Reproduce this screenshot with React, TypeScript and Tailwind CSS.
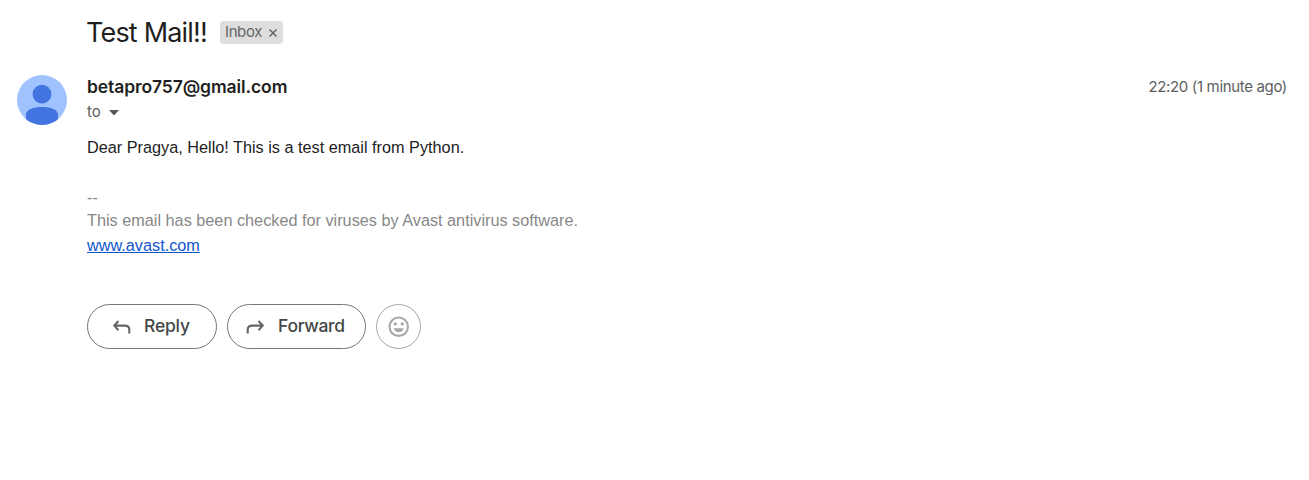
import React from "react";

function Avatar() {
  return (
    <svg width="50" height="50" viewBox="0 0 50 50" className="shrink-0">
      <clipPath id="avatar-clip">
        <circle cx="25" cy="25" r="25" />
      </clipPath>
      <g clipPath="url(#avatar-clip)">
        <rect width="50" height="50" fill="#a0c3ff" />
        <circle cx="25" cy="19.2" r="9.4" fill="#4374e0" />
        <path d="M9 52V40C9 34.5 16 32 25 32S41 34.5 41 40V52Z" fill="#4374e0" />
      </g>
    </svg>
  );
}

function ReplyIcon() {
  return (
    <svg width="20" height="16" viewBox="0 0 20 16" fill="none" stroke="#646769" strokeWidth="2.1">
      <path d="M6.4 2 2.3 6.6 6.4 11.2M2.5 6.6H12.8Q17.3 6.6 17.3 10.8V14.4" />
    </svg>
  );
}

function SmileIcon() {
  return (
    <svg width="22" height="22" viewBox="0 0 22 22" fill="#a8a8a8">
      <circle cx="10.7" cy="10.7" r="9.2" fill="none" stroke="#a8a8a8" strokeWidth="2.1" />
      <circle cx="7.2" cy="7.9" r="1.6" />
      <circle cx="14.2" cy="7.9" r="1.6" />
      <path d="M5.6 12.2H15.8C15 15 13.1 16.3 10.7 16.3S6.4 15 5.6 12.2Z" />
    </svg>
  );
}

export default function App() {
  return (
    <main className="h-[480px] w-full overflow-hidden bg-white pl-[17px] pr-[22px] pt-[14px] font-['Inter',sans-serif] text-[#1f1f1f]">
      <header className="flex h-9 items-center pl-[69px]">
        <h1 className="w-[134px] whitespace-nowrap pt-[2px] text-[27px] leading-9 tracking-[-0.82px]">Test Mail!!</h1>
        <span className="mt-px flex h-[23px] w-[63px] items-center gap-[7px] rounded-[4px] bg-[#ddd] pl-[5px] text-[15px] tracking-[-0.4px] text-[#666]">
          Inbox
          <svg width="8" height="8" viewBox="0 0 8 8" stroke="#666" strokeWidth="1.5" className="mt-px shrink-0">
            <path d="m.5.5 7 7m0-7-7 7" />
          </svg>
        </span>
      </header>
      <section className="mt-[25px] flex gap-5">
        <Avatar />
        <div className="flex-1">
          <div className="flex h-6 items-center justify-between">
            <strong className="text-[17.5px] font-semibold tracking-[-0.1px]">betapro757@gmail.com</strong>
            <time className="text-[15px] tracking-[-0.34px] text-[#5e5e5e]">22:20 (1 minute ago)</time>
          </div>
          <div className="flex h-[26px] items-center gap-[8px] text-[15px] text-[#5e5e5e]">
            to
            <svg width="10" height="6" viewBox="0 0 10 6" fill="#555" className="mt-px">
              <path d="M0 0H10L5 5.5Z" />
            </svg>
          </div>
          <div className="mt-[10px] font-['Liberation_Sans',Arial,sans-serif] text-[16.25px] leading-[25px]">
            <p className="text-[#222]">Dear Pragya, Hello! This is a test email from Python.</p>
            <div className="mt-[25px] text-[#888]">
              <p>--</p>
              <p className="-mt-[2px]">This email has been checked for viruses by Avast antivirus software.</p>
              <a href="#" className="block text-[#15c] underline">www.avast.com</a>
            </div>
          </div>
          <div className="mt-[46px] flex gap-[10px] text-[17.5px] font-medium text-[#444746]">
            <button className="flex h-[45px] w-[130px] items-center gap-[12px] rounded-full border border-[#747775] pl-[24px]">
              <ReplyIcon />
              <span className="tracking-[-0.2px]">Reply</span>
            </button>
            <button className="flex h-[45px] w-[139px] items-center gap-[13px] rounded-full border border-[#747775] pl-[17px]">
              <span className="-scale-x-100">
                <ReplyIcon />
              </span>
              <span className="tracking-[-0.3px]">Forward</span>
            </button>
            <button aria-label="Add reaction" className="flex size-[45px] items-center justify-center rounded-full border border-[#a5a6a5]">
              <SmileIcon />
            </button>
          </div>
        </div>
      </section>
    </main>
  );
}
